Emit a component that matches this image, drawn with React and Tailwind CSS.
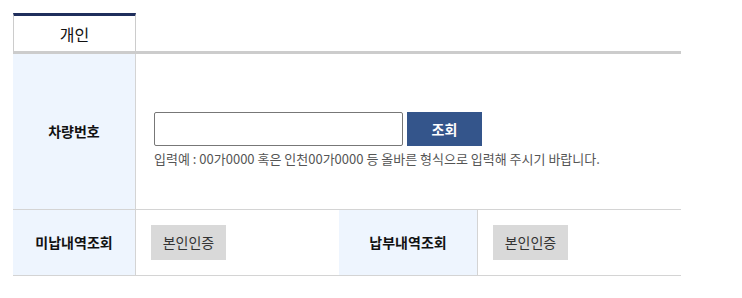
export default function App() {
  const font = { fontFamily: '"Noto Sans CJK KR", "Noto Sans", sans-serif' };
  return (
    <div className="bg-white w-[742px] h-[298px] pt-[13px] pl-[13px]" style={font}>
      <div className="w-[668px]">
        <div className="flex">
          <div className="w-[123px] h-[38px] border-t-[3px] border-t-[#1f2e5c] border-x border-x-[#cccccc] flex items-center justify-center text-[16px] text-[#111] font-normal">
            개인
          </div>
        </div>
        <div className="h-[3px] bg-[#cccccc]" />
        <div className="flex border-b border-[#d4d4d4] h-[156px]">
          <div className="w-[123px] border-r border-[#d4d4d4] bg-[#eef5fe] flex items-center justify-center text-[14px] font-bold text-[#111]">
            차량번호
          </div>
          <div className="flex-1 pl-[18px] pt-[58px]">
            <div className="flex gap-[4px]">
              <input
                type="text"
                className="w-[249px] h-[34px] border border-[#777] rounded-[2px] outline-none"
              />
              <button className="w-[75px] h-[34px] bg-[#34558b] text-white text-[14px] font-bold">
                조회
              </button>
            </div>
            <div className="mt-[3px] text-[13px] leading-[20px] text-[#555]">
              입력예 : 00가0000 혹은 인천00가0000 등 올바른 형식으로 입력해 주시기 바랍니다.
            </div>
          </div>
        </div>
        <div className="flex border-b border-[#d4d4d4] h-[66px]">
          <div className="w-[123px] border-r border-[#d4d4d4] bg-[#eef5fe] flex items-center justify-center text-[14px] font-bold text-[#111]">
            미납내역조회
          </div>
          <div className="w-[203px] flex items-center pl-[15px]">
            <button className="w-[75px] h-[35px] bg-[#d9d9d9] text-[14px] text-[#333]">
              본인인증
            </button>
          </div>
          <div className="w-[139px] border-r border-[#d4d4d4] bg-[#eef5fe] flex items-center justify-center text-[14px] font-bold text-[#111]">
            납부내역조회
          </div>
          <div className="flex-1 flex items-center pl-[15px]">
            <button className="w-[75px] h-[35px] bg-[#d9d9d9] text-[14px] text-[#333]">
              본인인증
            </button>
          </div>
        </div>
      </div>
    </div>
  );
}
